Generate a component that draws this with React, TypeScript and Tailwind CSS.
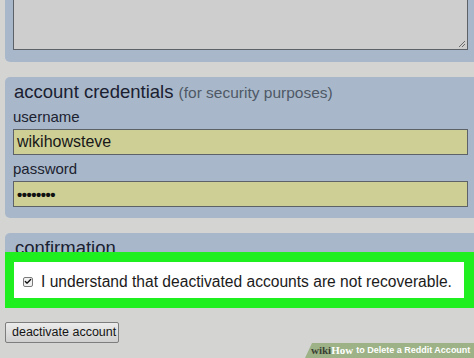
import { Check } from "lucide-react";

const panel = "ml-[5px] rounded-l-[5px] bg-[#a8b8ca]";

const Field = ({ label, value, dots }: { label: string; value: string; dots?: boolean }) => (
  <>
    <div className="mt-[5px] h-[18px] text-[15px] leading-[18px] text-[#1c2230]">{label}</div>
    <div className="mt-[3px] flex h-[26px] w-[455px] items-center border border-[#5d6268] bg-[#cdcf95] pl-[3px]">
      <span className={dots ? "text-[15px] font-bold leading-none tracking-[-0.5px] text-[#111]" : "text-[16px] leading-[20px] text-[#181818]"}>
        {value}
      </span>
    </div>
  </>
);

export default function App() {
  return (
    <div className="relative h-[358px] w-[474px] overflow-hidden bg-[#d4d4d3] font-['Liberation_Sans',Arial,sans-serif]">
      {/* textarea panel, cut at the top */}
      <div className={`${panel} -mt-[10px] pl-[8px] pt-[2px] pb-[12px]`}>
        <div className="relative h-[58px] w-[455px] border border-[#5d6268] bg-[#cecece]">
          <svg className="absolute bottom-[1px] right-[1px]" width="9" height="9" viewBox="0 0 9 9">
            <path d="M8 2 L2 8 M8 5 L5 8" stroke="#6a6a6a" strokeWidth="1" />
          </svg>
        </div>
      </div>

      {/* account credentials */}
      <div className={`${panel} mt-[15px] pl-[8px] pt-[4px] pb-[11px]`}>
        <div className="h-[22px] pl-[1px] text-[18.5px] leading-[22px] text-[#1a2030]">
          account credentials{" "}
          <span className="text-[15.5px] text-[#4f5866]">(for security purposes)</span>
        </div>
        <Field label="username" value="wikihowsteve" />
        <Field label="password" value="••••••••" dots />
      </div>

      {/* confirmation */}
      <div className={`${panel} mt-[15px] pt-[4px]`}>
        <div className="h-[22px] pl-[10px] text-[18.5px] leading-[22px] text-[#1a2030]">confirmation</div>
        <div className="relative -mt-[7px] bg-[#1fee1f] py-[10px] pl-[9px] pr-[10px]">
          <div className="flex h-[36px] items-center gap-[8px] bg-white pl-[9px] pt-[3px]">
            <span className="flex h-[10px] w-[10px] items-center justify-center rounded-[2px] border border-[#7a7a7a] bg-[#f1f1f1]">
              <Check className="h-[9px] w-[9px] text-[#111]" strokeWidth={4} />
            </span>
            <span className="text-[15.6px] leading-[18px] text-[#1b1b1b]">
              I understand that deactivated accounts are not recoverable.
            </span>
          </div>
        </div>
      </div>

      <button className="ml-[5px] mt-[14px] flex h-[21px] w-[114px] items-center rounded-[2px] border border-[#7d7d7d] bg-gradient-to-b from-[#ececec] to-[#cfcfcf] pl-[6px] text-[12.5px] leading-none text-[#141414]">
        deactivate account
      </button>

      {/* wikiHow watermark */}
      <div className="absolute bottom-0 right-0 flex h-[15px] w-[169px] items-center whitespace-nowrap rounded-tl-[6px] bg-[#9db387] pl-[6px] [clip-path:polygon(7px_0,100%_0,100%_100%,0_100%)]">
        <span className="font-['Liberation_Serif',serif] text-[11px] font-bold leading-none text-[#3b4034]">wiki</span>
        <span className="font-['Liberation_Serif',serif] text-[11px] font-bold leading-none text-white">How</span>
        <span className="ml-[3px] text-[9px] font-bold leading-none text-white">to Delete a Reddit Account</span>
      </div>
    </div>
  );
}
